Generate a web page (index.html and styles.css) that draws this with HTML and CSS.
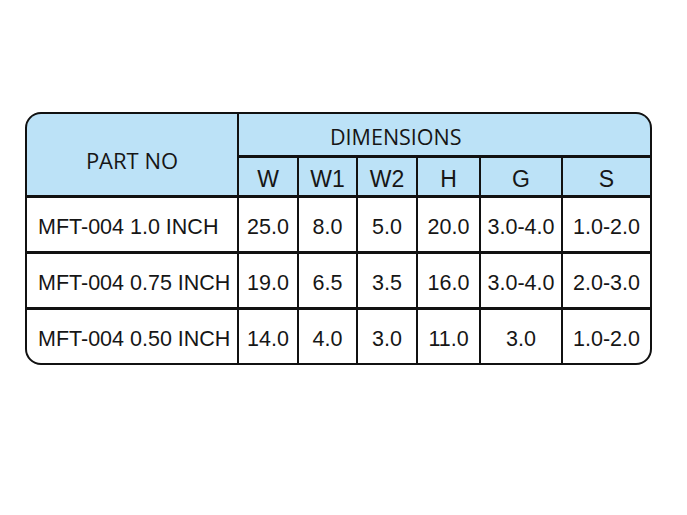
FILE: index.html
```html
<!DOCTYPE html>
<html>
<head>
<meta charset="utf-8">
<link rel="stylesheet" href="styles.css">
</head>
<body>
<div class="page">
  <div class="spec">
    <div class="cell head part">PART NO</div>
    <div class="cell head dims">DIMENSIONS</div>
    <div class="cell head sub">W</div>
    <div class="cell head sub">W1</div>
    <div class="cell head sub">W2</div>
    <div class="cell head sub">H</div>
    <div class="cell head sub">G</div>
    <div class="cell head sub">S</div>

    <div class="cell name">MFT-004 1.0 INCH</div>
    <div class="cell val">25.0</div>
    <div class="cell val">8.0</div>
    <div class="cell val">5.0</div>
    <div class="cell val">20.0</div>
    <div class="cell val">3.0-4.0</div>
    <div class="cell val">1.0-2.0</div>

    <div class="cell name">MFT-004 0.75 INCH</div>
    <div class="cell val">19.0</div>
    <div class="cell val">6.5</div>
    <div class="cell val">3.5</div>
    <div class="cell val">16.0</div>
    <div class="cell val">3.0-4.0</div>
    <div class="cell val">2.0-3.0</div>

    <div class="cell name">MFT-004 0.50 INCH</div>
    <div class="cell val">14.0</div>
    <div class="cell val">4.0</div>
    <div class="cell val">3.0</div>
    <div class="cell val">11.0</div>
    <div class="cell val">3.0</div>
    <div class="cell val">1.0-2.0</div>
  </div>
</div>
</body>
</html>
```

FILE: styles.css
```css
html, body {
  margin: 0;
  padding: 0;
  background: #ffffff;
}

.page {
  padding: 112px 35px 0 25px;
}

.spec {
  width: 627px;
  box-sizing: border-box;
  display: grid;
  grid-template-columns: 210px 58px 57px 58px 61px 80px 87px;
  grid-template-rows: 41px 37px 53px 53px 53px;
  column-gap: 2px;
  row-gap: 3px;
  background: #111111;
  border: 2px solid #111111;
  border-radius: 16px;
  overflow: hidden;
}

.cell {
  display: flex;
  align-items: center;
  justify-content: center;
  background: #ffffff;
  color: #161616;
  font-family: "Liberation Sans", Arial, sans-serif;
  font-size: 21.5px;
  white-space: nowrap;
  overflow: visible;
}

.head {
  background: #bce2f7;
}

.part {
  grid-row: 1 / span 2;
  font-family: "Open Sans", sans-serif;
  font-size: 22px;
  padding-top: 10px;
}

.dims {
  grid-column: 2 / span 6;
  justify-content: flex-start;
  padding-left: 91px;
  font-family: "Open Sans", sans-serif;
  font-size: 21.5px;
  padding-top: 4px;
}

.sub {
  font-size: 23px;
  padding-top: 6px;
}

.name {
  justify-content: flex-start;
  padding-left: 11px;
  padding-top: 5px;
}

.val {
  padding-top: 5px;
}
```
